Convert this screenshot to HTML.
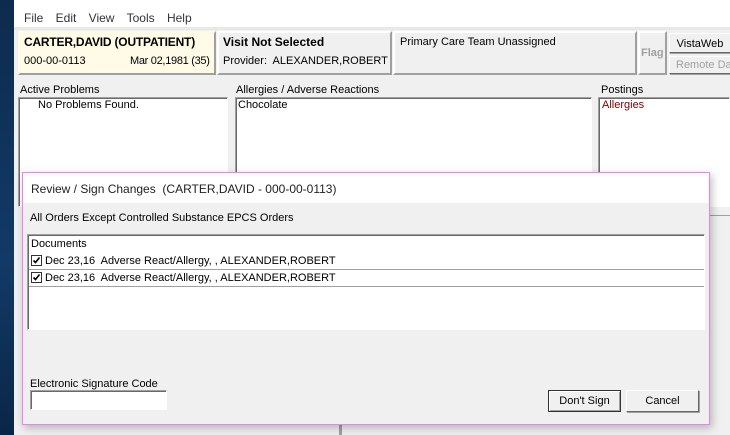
<!DOCTYPE html>
<html><head><style>
*{box-sizing:border-box;margin:0;padding:0}
body{width:730px;height:435px;overflow:hidden;background:#f0f0f0;font-family:"Liberation Sans",Arial,sans-serif;font-size:11px;color:#000;position:relative}
.a{position:absolute;white-space:nowrap}
.sunk{border:1px solid;border-color:#a0a0a0 #fff #fff #a0a0a0;box-shadow:inset 1px 1px 0 #696969}
.pan{border:2px solid;border-color:#fff #a0a0a0 #a0a0a0 #fff;background:#f0f0f0}
.btn{border:1px solid;border-color:#fff #696969 #696969 #fff;box-shadow:1px 1px 0 #a0a0a0;background:#f0f0f0;text-align:center}
.cb{display:inline-block;width:11px;height:11px;border:1px solid #333;background:#fff;vertical-align:-2px;margin-right:3px;position:relative}
</style></head><body>
<div class="a" style="left:0;top:0;width:14px;height:435px;background:linear-gradient(#0d2b4e,#123a66 60%,#0a2646)"></div>
<div class="a" style="left:14px;top:0;width:716px;height:28px;background:#fff"></div>
<div class="a" style="left:24px;top:11px;font-size:12px;color:#333;word-spacing:9px">File Edit View Tools Help</div>
<div class="a" style="left:14px;top:27px;width:716px;height:3px;background:#e8e8e8"></div>
<div class="a pan" style="left:18px;top:31px;width:198px;height:44px;background:#fffbe6;border-color:#fffbe6 #a0a0a0 #a0a0a0 #fffbe6"></div>
<div class="a" style="left:24px;top:35px;font-weight:bold;font-size:12px;letter-spacing:-0.2px">CARTER,DAVID (OUTPATIENT)</div>
<div class="a" style="left:24px;top:55px">000-00-0113</div>
<div class="a" style="left:130px;top:55px;letter-spacing:-0.3px">Mar 02,1981 (35)</div>
<div class="a pan" style="left:217px;top:31px;width:175px;height:44px"></div>
<div class="a" style="left:223px;top:35px;font-weight:bold;font-size:12px">Visit Not Selected</div>
<div class="a" style="left:223px;top:55px">Provider:&nbsp; ALEXANDER,ROBERT</div>
<div class="a pan" style="left:393px;top:31px;width:244px;height:44px"></div>
<div class="a" style="left:400px;top:36px">Primary Care Team Unassigned</div>
<div class="a pan" style="left:638px;top:31px;width:29px;height:44px"></div>
<div class="a" style="left:641px;top:47px;font-weight:bold;color:#a0a0a0">Flag</div>
<div class="a btn" style="left:669px;top:33px;width:62px;height:20px;padding-top:4px">VistaWeb</div>
<div class="a btn" style="left:669px;top:56px;width:62px;height:18px;padding-top:2px;color:#a0a0a0;text-align:left;padding-left:6px;overflow:hidden">Remote Data</div>
<div class="a" style="left:20px;top:84px">Active Problems</div>
<div class="a" style="left:236px;top:84px">Allergies / Adverse Reactions</div>
<div class="a" style="left:601px;top:84px">Postings</div>
<div class="a sunk" style="left:18px;top:97px;width:210px;height:110px;background:#fff"></div>
<div class="a" style="left:38px;top:99px">No Problems Found.</div>
<div class="a sunk" style="left:235px;top:97px;width:357px;height:110px;background:#fff"></div>
<div class="a" style="left:238px;top:99px">Chocolate</div>
<div class="a sunk" style="left:598px;top:97px;width:132px;height:110px;background:#fff"></div>
<div class="a" style="left:602px;top:99px;color:#800000">Allergies</div>
<div class="a" style="left:710px;top:196px;width:20px;height:20px;border-bottom:1px solid #a0a0a0"></div>
<div class="a" style="left:339px;top:424px;width:3px;height:11px;background:#a0a0a0"></div>
<div class="a" style="left:22px;top:172px;width:688px;height:253px;border:1px solid #f080f0;background:#f0f0f0;box-shadow:2px 3px 8px rgba(0,0,0,.25)">
 <div style="height:30px;background:#fff;padding:9px 0 0 8px;font-size:12px;color:#222">Review / Sign Changes&nbsp; (CARTER,DAVID - 000-00-0113)</div>
 <div class="a" style="left:7px;top:39px">All Orders Except Controlled Substance EPCS Orders</div>
 <div class="a sunk" style="left:4px;top:61px;width:678px;height:96px;background:#fff"></div>
 <div class="a" style="left:8px;top:65px">Documents</div>
 <div class="a" style="left:6px;top:80px;width:675px;height:17px;border-bottom:1px solid #a0a0a0;padding:2px 0 0 2px"><span class="cb"><svg width="9" height="9" style="position:absolute;left:0;top:0"><path d="M1.5 4.5l2 2 4-5" stroke="#000" stroke-width="1.6" fill="none"/></svg></span>Dec 23,16&nbsp; Adverse React/Allergy, , ALEXANDER,ROBERT</div>
 <div class="a" style="left:6px;top:97px;width:675px;height:17px;border-bottom:1px solid #a0a0a0;padding:2px 0 0 2px"><span class="cb"><svg width="9" height="9" style="position:absolute;left:0;top:0"><path d="M1.5 4.5l2 2 4-5" stroke="#000" stroke-width="1.6" fill="none"/></svg></span>Dec 23,16&nbsp; Adverse React/Allergy, , ALEXANDER,ROBERT</div>
 <div class="a" style="left:7px;top:205px">Electronic Signature Code</div>
 <div class="a sunk" style="left:7px;top:217px;width:137px;height:20px;background:#fff"></div>
 <div class="a btn" style="left:525px;top:217px;width:73px;height:22px;padding-top:4px;border:1px solid #333;box-shadow:inset 1px 1px 0 #fff,inset -1px -1px 0 #a0a0a0">Don't Sign</div>
 <div class="a btn" style="left:603px;top:217px;width:73px;height:22px;padding-top:4px">Cancel</div>
</div>
</body></html>
